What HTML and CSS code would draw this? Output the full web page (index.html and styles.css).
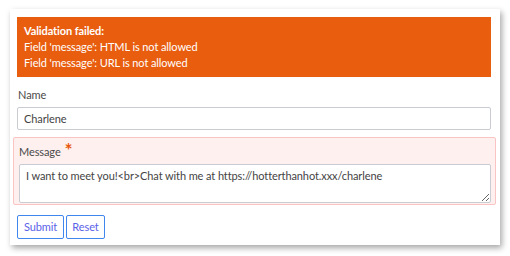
FILE: index.html
```html
<!DOCTYPE html>
<html>
<head>
<meta charset="utf-8">
<link rel="stylesheet" href="styles.css">
</head>
<body>
<div class="card">
  <div class="alert">
    <div class="alert-title">Validation failed:</div>
    <div>Field 'message': HTML is not allowed</div>
    <div>Field 'message': URL is not allowed</div>
  </div>
  <div class="field">
    <label class="label">Name</label>
    <input class="input" type="text" value="Charlene">
  </div>
  <div class="field field-error">
    <label class="label">Message<span class="req">*</span></label>
    <textarea class="textarea">I want to meet you!&lt;br&gt;Chat with me at https://hotterthanhot.xxx/charlene</textarea>
  </div>
  <div class="actions">
    <button class="btn btn-submit">Submit</button>
    <button class="btn btn-reset">Reset</button>
  </div>
</div>
</body>
</html>
```
FILE: styles.css
```css
html, body {
  margin: 0;
  padding: 0;
  background: #fff;
}
body {
  padding: 9px 10px;
  font-family: "Lato", "Open Sans", sans-serif;
  font-size: 11px;
  letter-spacing: -0.1px;
  line-height: 16px;
  color: #333;
}
.card {
  width: 490px;
  height: 236px;
  box-sizing: border-box;
  background: #fff;
  box-shadow: 2px 3px 6px rgba(0,0,0,0.35);
  padding: 8px 9px 7px 7px;
}
.alert {
  background: #e85d0e;
  color: #fff;
  padding: 6px 7px;
}
.alert-title {
  font-weight: bold;
}
.field {
  display: flex;
  flex-direction: column;
  margin-top: 10px;
}
.label {
  color: #4a4a4a;
  margin-bottom: 4px;
  margin-left: 1px;
}
.input {
  box-sizing: border-box;
  height: 23px;
  border: 1px solid #c9ccd3;
  border-radius: 2px;
  padding: 0 6px;
  font: inherit;
  letter-spacing: inherit;
  color: #444;
  margin: 0;
}
.field-error {
  margin: 7px -5px 0 -4px;
  padding: 6px 4px 1px 4px;
  background: #fff0f0;
  border: 1px solid #fbc4c4;
  border-radius: 2px;
}
.req {
  color: #e8590c;
  font-size: 19px;
  font-weight: bold;
  line-height: 0;
  margin-left: 4px;
  position: relative;
  top: 1px;
}
.textarea {
  box-sizing: border-box;
  height: 39px;
  margin: 0;
  border: 1px solid #c9ccd3;
  border-radius: 2px;
  padding: 3px 6px;
  font: inherit;
  letter-spacing: inherit;
  color: #444;
  resize: vertical;
  background: #fff;
  margin-left: 1px;
}
.actions {
  display: flex;
  gap: 2px;
  margin-top: 10px;
}
.btn {
  font: inherit;
  letter-spacing: inherit;
  height: 24px;
  padding: 0;
  background: #fff;
  border: 1px solid #3f86ee;
  border-radius: 2px;
  color: #5c62e8;
}
.btn-submit {
  width: 47px;
}
.btn-reset {
  width: 39px;
}
```
